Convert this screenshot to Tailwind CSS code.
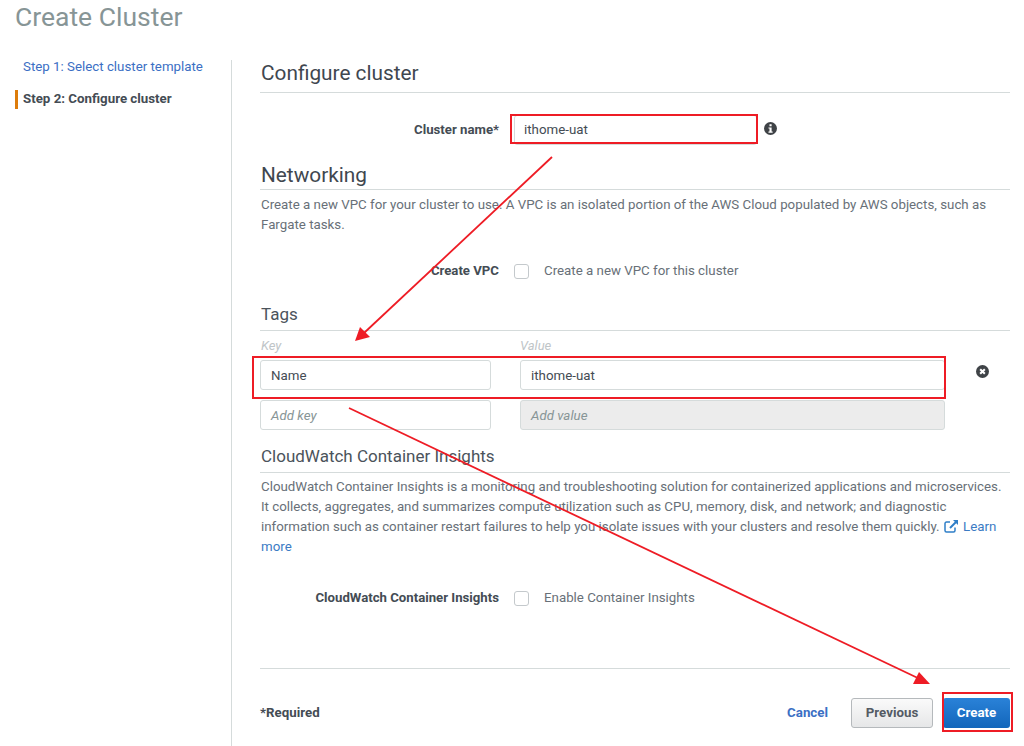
<!DOCTYPE html>
<html>
<head>
<meta charset="utf-8">
<script src="https://cdn.jsdelivr.net/npm/@tailwindcss/browser@4"></script>
</head>
<body class="bg-white">
<div class="relative w-[1024px] h-[746px] overflow-hidden font-['Roboto',sans-serif] text-[13.3px] text-[#545b64]">
  <h1 class="h-[60px] pl-[15px] text-[26.5px] leading-[33px] text-[#879596]">Create Cluster</h1>
  <div class="flex h-[686px]">
    <nav class="w-[232px] shrink-0 border-r border-[#d5dbdb] leading-[16px]">
      <a class="block -mt-px pl-[23px] mb-[15px] text-[#3b6fc4]">Step 1: Select cluster template</a>
      <div class="ml-[15px] border-l-[3px] border-[#dd7c0b] pl-[5px] pb-[2px] leading-[17px] font-bold text-[#444c54]">Step 2: Configure cluster</div>
    </nav>
    <main class="w-[750px] ml-[28px] relative">
      <h2 class="pl-px text-[20.8px] leading-[26px] text-[#3f474f] h-[33px] border-b border-[#d5dbdb]">Configure cluster</h2>
      <div class="flex items-center h-[30px] mt-[22px]">
        <label class="w-[239px] text-right text-[13.2px] font-bold text-[#444c54]">Cluster name*</label>
        <div class="ml-[15px] w-[243px] h-[30px] px-[9px] flex items-center border border-[#d5dbdb] rounded-[3px] text-[#444c54]">ithome-uat</div>
        <svg class="ml-[7px] -mt-[3px] w-[13px] h-[13px]" viewBox="0 0 14 14"><circle cx="7" cy="7" r="7" fill="#3f4347"/><rect x="5.900" y="2.400" width="2.300" height="2.200" fill="#fff"/><path d="M4.800 5.800h3.400v4.400h1.100v1.300H4.800v-1.300h1.100V7.100H4.800z" fill="#fff"/></svg>
      </div>
      <h2 class="pl-px pt-px text-[20.8px] leading-[26px] text-[#3f474f] mt-[16px] h-[29px] border-b border-[#d5dbdb]">Networking</h2>
      <p class="pl-px mt-[5px] leading-[20px] text-[#687078] w-[740px]">Create a new VPC for your cluster to use. A VPC is an isolated portion of the AWS Cloud populated by AWS objects, such as Fargate tasks.</p>
      <div class="flex items-center h-[20px] mt-[26px]">
        <label class="w-[239px] text-right text-[13.2px] font-bold text-[#444c54]">Create VPC</label>
        <span class="ml-[15px] w-[15px] h-[15px] border border-[#c4c9cc] rounded-[3px]"></span>
        <span class="ml-[15px] text-[#687078]">Create a new VPC for this cluster</span>
      </div>
      <h2 class="pl-px text-[17px] leading-[22px] text-[#4b535b] mt-[22px] h-[28px] border-b border-[#d5dbdb]">Tags</h2>
      <div class="flex pl-px mt-[7px] h-[16px] text-[13px] leading-[16px] italic text-[#c0c5c8]">
        <span class="w-[259px]">Key</span><span>Value</span>
      </div>
      <div class="grid grid-cols-[231px_425px] gap-x-[29px] gap-y-[10px] mt-[6px]">
        <div class="h-[30px] px-[10px] pt-px flex items-center border border-[#d5dbdb] rounded-[3px] text-[#444c54]">Name</div>
        <div class="h-[30px] px-[10px] pt-px flex items-center border border-[#d5dbdb] rounded-[3px] text-[#444c54]">ithome-uat</div>
        <div class="h-[30px] px-[10px] pt-px flex items-center border border-[#d5dbdb] rounded-[3px] italic text-[#879596]">Add key</div>
        <div class="h-[30px] px-[10px] pt-px flex items-center border border-[#d5dbdb] rounded-[3px] bg-[#ececec] italic text-[#879596]">Add value</div>
      </div>
      <svg class="absolute left-[716px] top-[305px] w-[13px] h-[13px]" viewBox="0 0 14 14"><circle cx="7" cy="7" r="7" fill="#3f4347"/><path d="M4.500 4.500l5 5M9.500 4.500l-5 5" stroke="#fff" stroke-width="2.200"/></svg>
      <h3 class="pl-px text-[17px] leading-[22px] text-[#4b535b] mt-[15px] h-[28px] border-b border-[#d5dbdb]">CloudWatch Container Insights</h3>
      <p class="pl-px mt-[4px] leading-[20px] text-[#687078] w-[745px]">CloudWatch Container Insights is a monitoring and troubleshooting solution for containerized applications and microservices. It collects, aggregates, and summarizes compute utilization such as CPU, memory, disk, and network; and diagnostic information such as container restart failures to help you isolate issues with your clusters and resolve them quickly. <svg class="inline-block w-[15px] h-[14px] mx-px align-[-2px]" viewBox="0 0 15 14" fill="none" stroke="#2f7fc8" stroke-width="1.500"><path d="M11 8.500v3a1.500 1.500 0 0 1-1.500 1.500h-7A1.500 1.500 0 0 1 1 11.500v-7A1.500 1.500 0 0 1 2.500 3H6"/><path d="M6 9l7-7" stroke-width="2"/><path d="M9 1h5v5z" fill="#2f7fc8" stroke="none"/></svg> <a class="text-[#3b7bc4]">Learn more</a></p>
      <div class="flex items-center h-[20px] mt-[31px]">
        <label class="w-[239px] text-right text-[13.2px] font-bold text-[#444c54]">CloudWatch Container Insights</label>
        <span class="ml-[15px] w-[15px] h-[15px] border border-[#c4c9cc] rounded-[3px]"></span>
        <span class="ml-[15px] text-[#687078]">Enable Container Insights</span>
      </div>
      <div class="mt-[60px] border-t border-[#d5dbdb] h-[88px] flex items-center">
        <span class="font-bold text-[#444c54]">*Required</span>
        <a class="ml-auto font-bold text-[#3b6fc4]">Cancel</a>
        <button class="ml-[23px] w-[82px] h-[30px] rounded-[3px] border border-[#b5b9bc] bg-gradient-to-b from-[#fafafa] to-[#e6e7e8] font-bold text-[#545b64]">Previous</button>
        <button class="ml-[10px] w-[67px] h-[30px] rounded-[3px] bg-gradient-to-b from-[#2a82d8] to-[#1166bb] font-bold text-white">Create</button>
      </div>
    </main>
  </div>
  <div class="absolute left-[510px] top-[114px] w-[248px] h-[30px] border-2 border-[#ee1c25]"></div>
  <div class="absolute left-[252px] top-[356px] w-[694px] h-[43px] border-2 border-[#ee1c25]"></div>
  <div class="absolute left-[942px] top-[692px] w-[71px] h-[40px] border-2 border-[#ee1c25]"></div>
  <svg class="absolute inset-0 w-[1024px] h-[746px]" viewBox="0 0 1024 746" fill="none">
    <path d="M552 157L364 333" stroke="#ee1c25" stroke-width="1.800"/>
    <path d="M355 341L360 327L370 337Z" fill="#ee1c25"/>
    <path d="M349 408L922 680" stroke="#ee1c25" stroke-width="1.800"/>
    <path d="M919 672L913 684L930 684Z" fill="#ee1c25"/>
  </svg>
</div>
</body>
</html>
